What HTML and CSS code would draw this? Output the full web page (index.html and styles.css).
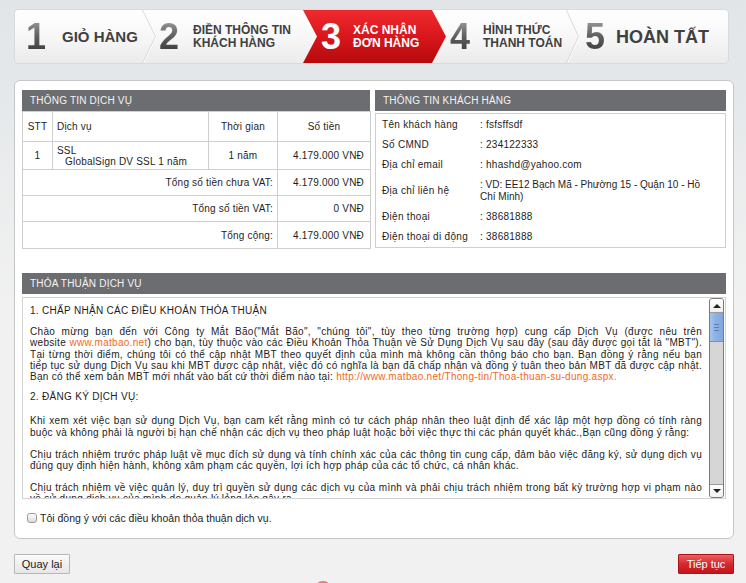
FILE: index.html
```html
<!DOCTYPE html>
<html lang="vi">
<head>
<meta charset="utf-8">
<title>Xác nhận đơn hàng</title>
<link rel="stylesheet" href="styles.css">
</head>
<body>
<div class="steps">
  <div class="step s1"><span class="num">1</span><span class="label big">GIỎ HÀNG</span></div>
  <div class="sep"><svg width="14" height="53" viewBox="0 0 14 53"><polyline points="0,0 13,26.5 0,53" class="sep-hi"/><polyline points="0.5,0 13.5,26.5 0.5,53" class="sep-line"/></svg></div>
  <div class="step s2"><span class="num">2</span><span class="label">ĐIỀN THÔNG TIN<br>KHÁCH HÀNG</span></div>
  <div class="step s3 active"><span class="num">3</span><span class="label">XÁC NHẬN<br>ĐƠN HÀNG</span></div>
  <div class="step s4"><span class="num">4</span><span class="label">HÌNH THỨC<br>THANH TOÁN</span></div>
  <div class="sep sep-b"><svg width="13" height="53" viewBox="0 0 13 53"><polyline points="0,0 12,26.5 0,53" class="sep-hi"/><polyline points="0.5,0 12.5,26.5 0.5,53" class="sep-line"/></svg></div>
  <div class="step s5"><span class="num">5</span><span class="label huge">HOÀN TẤT</span></div>
</div>

<div class="panel">
  <div class="top-row">
    <section class="col">
      <h2 class="bar-title">THÔNG TIN DỊCH VỤ</h2>
      <table class="svc">
        <colgroup><col class="w-stt"><col class="w-name"><col class="w-time"><col class="w-price"></colgroup>
        <tr class="hd"><th>STT</th><th class="l">Dịch vụ</th><th>Thời gian</th><th>Số tiền</th></tr>
        <tr class="r1"><td class="c">1</td><td class="l">SSL<br><span class="sub">GlobalSign DV SSL 1 năm</span></td><td class="c">1 năm</td><td class="r">4.179.000 VNĐ</td></tr>
        <tr class="r2"><td colspan="3" class="r">Tổng số tiền chưa VAT:</td><td class="r">4.179.000 VNĐ</td></tr>
        <tr class="r3"><td colspan="3" class="r">Tổng số tiền VAT:</td><td class="r">0 VNĐ</td></tr>
        <tr class="r4"><td colspan="3" class="r">Tổng cộng:</td><td class="r">4.179.000 VNĐ</td></tr>
      </table>
    </section>
    <section class="col">
      <h2 class="bar-title">THÔNG TIN KHÁCH HÀNG</h2>
      <div class="cust-box">
        <table class="cust">
          <tr><td class="k">Tên khách hàng</td><td class="v">: fsfsffsdf</td></tr>
          <tr><td class="k">Số CMND</td><td class="v">: 234122333</td></tr>
          <tr><td class="k">Địa chỉ email</td><td class="v">: hhashd@yahoo.com</td></tr>
          <tr class="two"><td class="k mid">Địa chỉ liên hệ</td><td class="v addr">: VD: EE12 Bạch Mã - Phường 15 - Quận 10 - Hồ Chí Minh)</td></tr>
          <tr><td class="k">Điện thoại</td><td class="v">: 38681888</td></tr>
          <tr><td class="k">Điện thoại di động</td><td class="v">: 38681888</td></tr>
        </table>
      </div>
    </section>
  </div>

  <section class="terms">
    <h2 class="bar-title">THỎA THUẬN DỊCH VỤ</h2>
    <div class="terms-box">
      <div class="terms-text">
        <h3>1. CHẤP NHẬN CÁC ĐIỀU KHOẢN THỎA THUẬN</h3>
        <p><span class="ln">Chào mừng bạn đến với Công ty Mắt Bão("Mắt Bão", "chúng tôi", tùy theo từng trường hợp) cung cấp Dịch Vụ (được nêu trên</span>
        <span class="ln">website <a href="#">www.matbao.net</a>) cho bạn, tùy thuộc vào các Điều Khoản Thỏa Thuận về Sử Dụng Dịch Vụ sau đây (sau đây được gọi tắt là "MBT").</span>
        <span class="ln">Tại từng thời điểm, chúng tôi có thể cập nhật MBT theo quyết định của mình mà không cần thông báo cho bạn. Bạn đồng ý rằng nếu bạn</span>
        <span class="ln">tiếp tục sử dụng Dịch Vụ sau khi MBT được cập nhật, việc đó có nghĩa là bạn đã chấp nhận và đồng ý tuân theo bản MBT đã được cập nhật.</span>
        Bạn có thể xem bản MBT mới nhất vào bất cứ thời điểm nào tại: <a href="#">http://www.matbao.net/Thong-tin/Thoa-thuan-su-dung.aspx.</a></p>
        <h3>2. ĐĂNG KÝ DỊCH VỤ:</h3>
        <p>Khi xem xét việc bạn sử dụng Dịch Vụ, bạn cam kết rằng mình có tư cách pháp nhân theo luật định để xác lập một hợp đồng có tính ràng buộc và không phải là người bị hạn chế nhận các dịch vụ theo pháp luật hoặc bởi việc thực thi các phán quyết khác.,Bạn cũng đồng ý rằng:</p>
        <p>Chịu trách nhiệm trước pháp luật về mục đích sử dụng và tính chính xác của các thông tin cung cấp, đảm bảo việc đăng ký, sử dụng dịch vụ đúng quy định hiện hành, không xâm phạm các quyền, lợi ích hợp pháp của các tổ chức, cá nhân khác.</p>
        <p>Chịu trách nhiệm về việc quản lý, duy trì quyền sử dụng các dịch vụ của mình và phải chịu trách nhiệm trong bất kỳ trường hợp vi phạm nào về sử dụng dịch vụ của mình do quản lý lỏng lẻo gây ra.</p>
      </div>
      <div class="vscroll">
        <div class="sb-btn up"><span class="tri-up"></span></div>
        <div class="sb-thumb"><span class="grip"></span></div>
        <div class="sb-track"></div>
        <div class="sb-btn down"><span class="tri-down"></span></div>
      </div>
    </div>
    <label class="agree"><input type="checkbox" class="chk"> Tôi đồng ý với các điều khoản thỏa thuận dịch vụ.</label>
  </section>
</div>

<div class="actions">
  <button class="btn back">Quay lại</button>
  <button class="btn next">Tiếp tục</button>
</div>
<div class="foot-logo"><span class="dot"></span></div>
</body>
</html>
```

FILE: styles.css
```css
html {
  overflow: hidden;
  background: linear-gradient(#e1e5e8 0, #e6e9eb 110px, #eeefef 240px, #f1f1f1 320px, #f1f1f1 100%);
  min-height: 100%;
}
body {
  margin: 0;
  font-family: "Liberation Sans", Arial, sans-serif;
  font-size: 10px;
  color: #1e1e1e;
}

/* ---------- step bar ---------- */
.steps {
  display: flex;
  box-sizing: border-box;
  width: 715px;
  height: 55px;
  margin: 9px 0 0 14px;
  border: 1px solid #d8dadb;
  border-radius: 4px;
  background: linear-gradient(#ffffff, #f7f7f7 50%, #ebebeb);
}
.step {
  display: flex;
  align-items: center;
  box-sizing: border-box;
  height: 53px;
  gap: 13px;
}
.s1 { width: 127px; padding-left: 11px; gap: 16px; }
.s2 { width: 147px; padding-left: 3px; gap: 14px; }
.s3 { width: 143px; padding-left: 18px; gap: 12px; }
.s4 { width: 120px; padding-left: 4px; gap: 13px; }
.s5 { width: 149px; padding-left: 6px; gap: 11px; }
.sep { width: 14px; height: 53px; flex: none; }
.sep-b { width: 13px; }
.sep svg { display: block; }
.sep-line { fill: none; stroke: #d9d9d9; stroke-width: 1; }
.sep-hi { fill: none; stroke: #ffffff; stroke-width: 1; transform: translateX(1.5px); }

.num {
  font-size: 36px;
  font-weight: bold;
  line-height: 36px;
  background: linear-gradient(#a0a0a0, #626262 45%, #353535);
  -webkit-background-clip: text;
  background-clip: text;
  color: transparent;
}
.label {
  font-size: 12px;
  font-weight: bold;
  line-height: 13px;
  color: #404040;
}
.label.big { font-size: 15px; line-height: 18px; }
.label.huge { font-size: 18px; line-height: 20px; }

.active {
  background: linear-gradient(#ef2a2f, #d8161b 50%, #b50a0e);
  clip-path: polygon(0 0, calc(100% - 14px) 0, 100% 50%, calc(100% - 14px) 100%, 0 100%, 14px 50%);
}
.active .num { background: none; color: #ffffff; }
.active .label { color: #ffffff; }

/* ---------- panel ---------- */
.panel {
  box-sizing: border-box;
  width: 720px;
  margin: 16px 0 0 14px;
  padding: 9px 7px 14px 7px;
  background: #ffffff;
  border: 1px solid #c6c6c6;
  border-radius: 6px;
}
.top-row {
  display: grid;
  grid-template-columns: 348px 351px;
  column-gap: 5px;
}
.bar-title {
  margin: 0;
  height: 21px;
  line-height: 21px;
  padding-left: 8px;
  background: #6c6d71;
  color: #f4f4f4;
  font-size: 10px;
  font-weight: normal;
  letter-spacing: 0.2px;
}

/* service table */
.svc {
  width: 348px;
  border-collapse: collapse;
  table-layout: fixed;
}
.w-stt { width: 30px; }
.w-name { width: 156px; }
.w-time { width: 69px; }
.w-price { width: 93px; }
.svc th, .svc td {
  border: 1px solid #cfcfcf;
  padding: 0 4px;
  font-weight: normal;
  font-size: 10px;
  line-height: 11px;
  text-align: center;
  letter-spacing: 0.2px;
}
.svc .l { text-align: left; }
.svc .r { text-align: right; padding-right: 6px; }
.svc .c { text-align: center; }
.svc tr.r2 td:first-child,
.svc tr.r3 td:first-child,
.svc tr.r4 td:first-child { padding-right: 4px; }
.svc .hd th { height: 29px; }
.svc .r1 td { height: 27px; }
.svc .r2 td, .svc .r3 td { height: 25px; }
.svc .r4 td { height: 26px; }
.svc .sub { padding-left: 8px; }

/* customer box */
.cust-box {
  margin-top: 2px;
  height: 135px;
  box-sizing: border-box;
  border: 1px solid #cfcfcf;
  padding: 1px 6px 0 6px;
}
.cust {
  width: 100%;
  border-collapse: collapse;
}
.cust td {
  padding: 4px 0;
  height: 12px;
  line-height: 12px;
  vertical-align: top;
  font-size: 10px;
}
.cust .k { width: 98px; letter-spacing: 0.3px; white-space: nowrap; }
.cust .k.mid { vertical-align: middle; }
.cust .v { letter-spacing: 0.25px; }
.cust .v.addr { letter-spacing: 0; padding-right: 14px; }

/* terms */
.terms { margin-top: 24px; }
.terms-box {
  display: flex;
  margin-top: 3px;
  height: 202px;
  box-sizing: border-box;
  border: 1px solid #d3d3d3;
}
.terms-text {
  flex: 1;
  overflow: hidden;
  padding: 7px 7px 0 7px;
  font-size: 10px;
  line-height: 11.2px;
  color: #1c1c1c;
}
.terms-text h3 {
  margin: 0 0 10px;
  font-size: 10px;
  font-weight: normal;
  letter-spacing: 0.3px;
}
.terms-text p {
  margin: 0 0 11px;
  text-align: justify;
  letter-spacing: 0.3px;
}
.terms-text .ln {
  display: block;
  text-align: justify;
  text-align-last: justify;
}
.terms-text p + h3 { margin-top: -2px; margin-bottom: 13px; }
.terms-text a { color: #f26a24; text-decoration: none; }

/* fake scrollbar */
.vscroll {
  width: 13px;
  margin-right: 1px;
  display: flex;
  flex-direction: column;
  border: 1px solid #7a7a7a;
  border-radius: 3px;
  background: #d6d6d6;
  overflow: hidden;
}
.sb-btn {
  height: 13px;
  flex: none;
  display: flex;
  align-items: center;
  justify-content: center;
  background: linear-gradient(#ffffff, #f0f0f0);
}
.sb-btn.up { border-bottom: 1px solid #9a9a9a; }
.sb-btn.down { border-top: 1px solid #9a9a9a; height: 12px; }
.tri-up, .tri-down {
  width: 0;
  height: 0;
  border-left: 4px solid transparent;
  border-right: 4px solid transparent;
}
.tri-up { border-bottom: 4px solid #222; }
.tri-down { border-top: 4px solid #222; }
.sb-thumb {
  height: 28px;
  flex: none;
  display: flex;
  align-items: center;
  justify-content: center;
  background: linear-gradient(90deg, #a8c4ee, #8db2e6 40%, #7fa6de);
  border-bottom: 1px solid #6f93c8;
}
.grip {
  width: 5px;
  height: 5px;
  border-top: 1px solid #5d7fb6;
  border-bottom: 1px solid #5d7fb6;
  position: relative;
}
.grip::after {
  content: "";
  position: absolute;
  left: 0;
  right: 0;
  top: 2px;
  border-top: 1px solid #5d7fb6;
}
.sb-track { flex: 1; }

.agree {
  display: flex;
  align-items: center;
  gap: 3px;
  margin: 13px 0 0 5px;
  font-size: 10.5px;
  color: #222;
}
.chk {
  -webkit-appearance: none;
  appearance: none;
  margin: 0;
  width: 10px;
  height: 10px;
  border: 1px solid #9b9b9b;
  border-radius: 3px;
  background: linear-gradient(#ffffff, #d9d9d9);
}

/* buttons */
.actions {
  display: flex;
  justify-content: space-between;
  margin: 15px 12px 0 14px;
}
.btn {
  box-sizing: border-box;
  width: 56px;
  height: 20px;
  padding: 0;
  font-family: "Liberation Sans", Arial, sans-serif;
  font-size: 11px;
  border-radius: 1px;
}
.btn.back {
  border: 1px solid #b7b7b7;
  background: linear-gradient(#fbfbfb, #e6e6e6);
  color: #222;
}
.btn.next {
  border: 1px solid #b0121a;
  background: linear-gradient(#ec5f62, #d42a2f 50%, #c1161b);
  color: #ffffff;
}
.foot-logo {
  height: 3px;
  margin: 7px 0 0 315px;
  overflow: hidden;
}
.dot {
  display: block;
  width: 16px;
  height: 16px;
  border-radius: 50%;
  background: radial-gradient(circle at 50% 30%, #f2a4a4, #d84a4f 60%, #b91c22);
}
```
